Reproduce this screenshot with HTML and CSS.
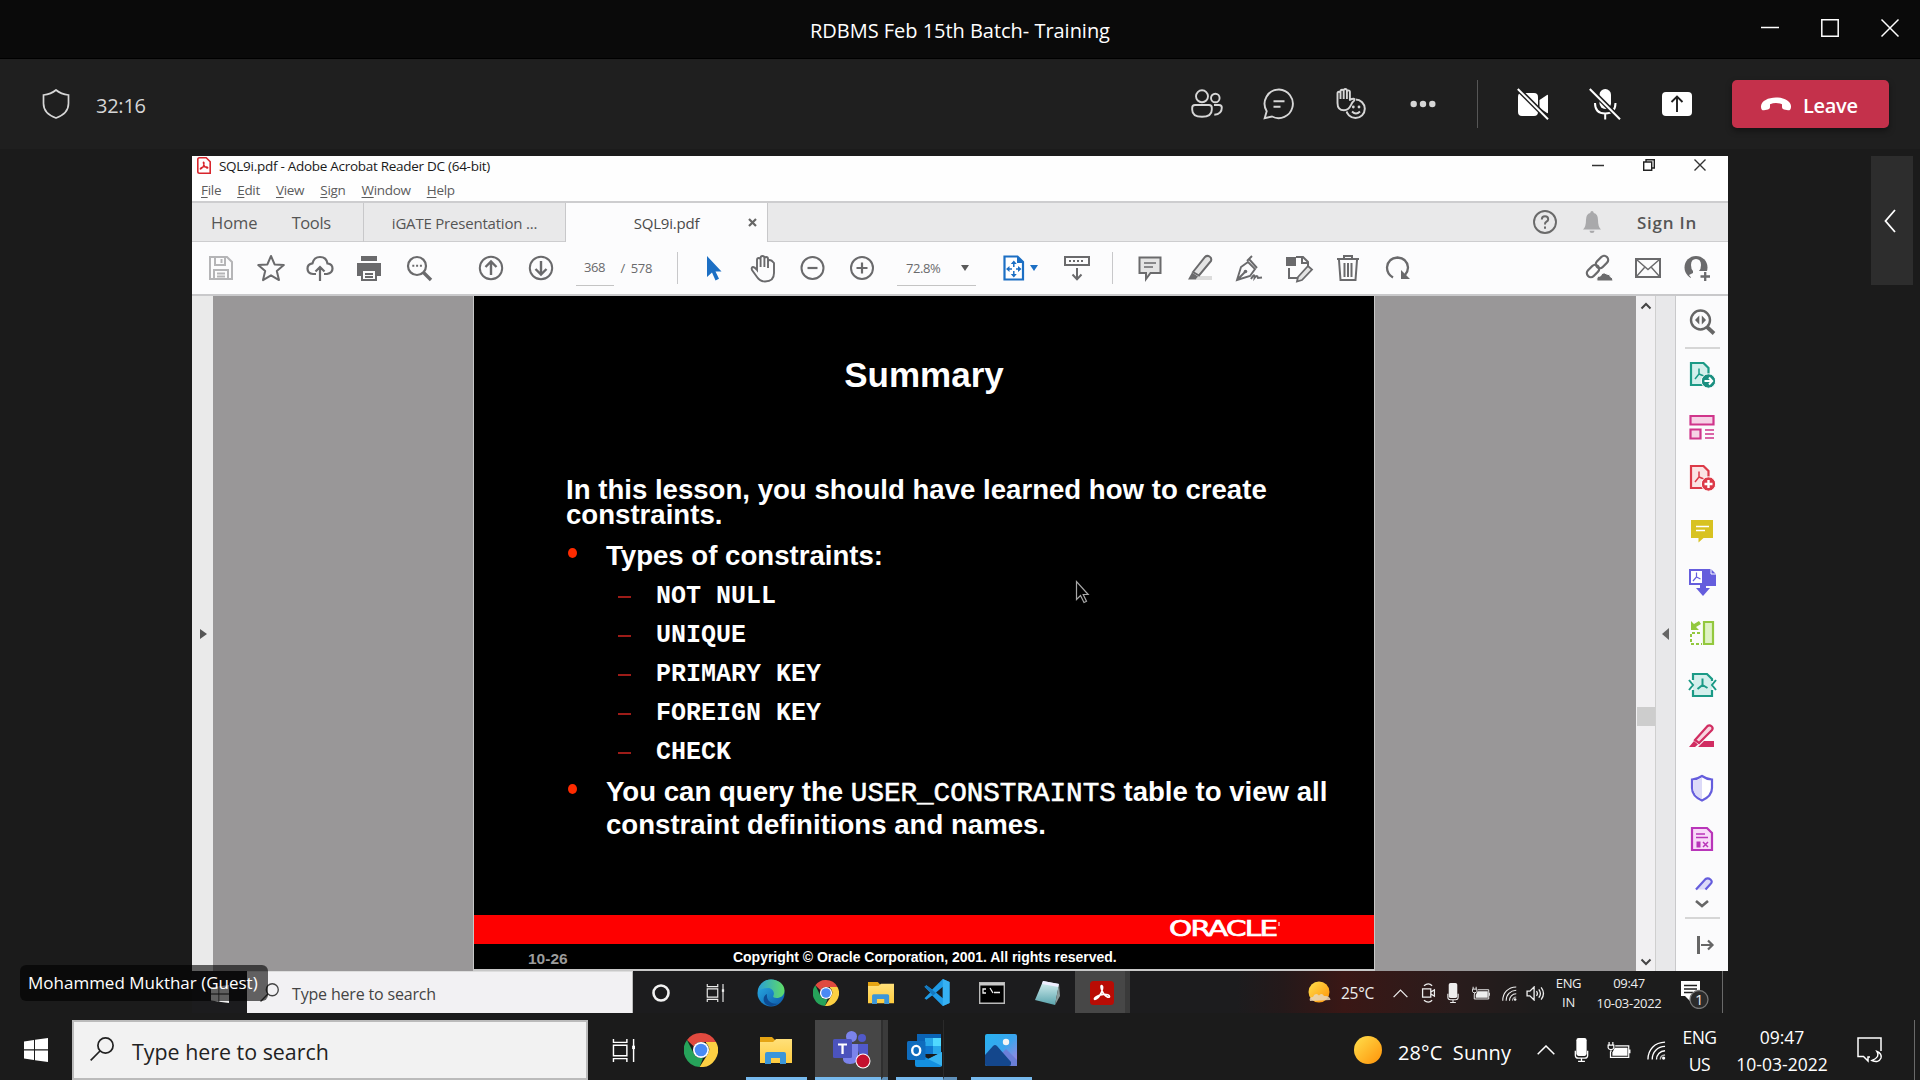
FILE: index.html
```html
<!DOCTYPE html>
<html lang="en">
<head>
<meta charset="utf-8">
<title>RDBMS Feb 15th Batch- Training</title>
<link rel="stylesheet" href="styles.css">
</head>
<body>
<svg class="sprite" aria-hidden="true">
  <defs>
    <linearGradient id="g-edge" x1="0" y1="0" x2="1" y2="1"><stop offset="0" stop-color="#2bb3e8"/><stop offset="1" stop-color="#0b56a8"/></linearGradient>
    <linearGradient id="g-edge2" x1="0" y1="0" x2="1" y2="0"><stop offset="0" stop-color="#2a9fd8"/><stop offset="1" stop-color="#5fdc66"/></linearGradient>
    <linearGradient id="g-sun" x1="0" y1="0" x2="1" y2="1"><stop offset="0" stop-color="#ffe04d"/><stop offset="1" stop-color="#ff9208"/></linearGradient>
    <linearGradient id="g-photo" x1="0" y1="0" x2="1" y2="1"><stop offset="0" stop-color="#27b2f0"/><stop offset=".5" stop-color="#3aa5ee"/><stop offset="1" stop-color="#b180dc"/></linearGradient>
    <linearGradient id="g-note" x1="0" y1="0" x2="0" y2="1"><stop offset="0" stop-color="#d8f1f2"/><stop offset="1" stop-color="#5aa4ad"/></linearGradient>
    <linearGradient id="g-fold" x1="0" y1="0" x2="0" y2="1"><stop offset="0" stop-color="#ffe07a"/><stop offset="1" stop-color="#ffcc3f"/></linearGradient>
  </defs>
  <symbol id="win" viewBox="0 0 24 24"><path fill="currentColor" d="M0 3.4 10 2v9.3H0zM11 1.8 24 0v11.3H11zM0 12.5h10V22L0 20.6zM11 12.5h13V24l-13-1.8z"/></symbol>
  <symbol id="search" viewBox="0 0 24 24"><g fill="none" stroke="currentColor" stroke-width="1.7"><circle cx="15.5" cy="8.5" r="7.6"/><path d="M10 14 .7 23.3"/></g></symbol>
  <symbol id="taskview" viewBox="0 0 24 24"><g fill="none" stroke="currentColor" stroke-width="1.5"><path d="M1 0v3.5h14V0M1 24v-3.5h14V24M1 6.5h14v11H1zM22 0v24"/></g><path fill="currentColor" d="M20.5 7h3v3.5h-3z"/></symbol>
  <symbol id="chrome" viewBox="0 0 34 34"><path fill="#e04a3f" d="M17 0a17 17 0 0 1 15 9H17a8 8 0 0 0-7.2 4.5L3 7A17 17 0 0 1 17 0z"/><path fill="#26a35a" d="M3 7l6.8 13.5A8 8 0 0 0 17 25l2 .2L15.600 34A17 17 0 0 1 3 7z"/><path fill="#fdd043" d="M32 9a17 17 0 0 1-16.400 25L23.500 21.500A8 8 0 0 0 22 10V9z"/><circle cx="17" cy="17" r="8" fill="#fff"/><circle cx="17" cy="17" r="6.300" fill="#4a8af4"/></symbol>
  <symbol id="folder" viewBox="0 0 32 27"><path fill="#e5a413" d="M0 0h12l3 3v4H0z"/><path fill="url(#g-fold)" d="M0 5h13l3-3h16v24H0z"/><path fill="#3b96d9" d="M5 27V17q0-2 2-2h17q2 0 2 2v10h-6v-6h-9v6z"/></symbol>
  <symbol id="edge" viewBox="0 0 28 28"><circle cx="14" cy="14" r="13.500" fill="url(#g-edge)"/><path fill="url(#g-edge2)" d="M1 12C3 4 8 .5 14 .5c8 0 13.500 5 13.500 11 0 5-4 7.500-8 7.500-3 0-4-1-3-2.500C18 13 15 9 11 9c-5 0-9 2-10 3z"/><path fill="#0c4b93" d="M10 15c-1 6 4 11 11 9.500-5 4-12 3-14-2-1.200-3.500.5-6.500 3-7.500z"/></symbol>
  <symbol id="vscode" viewBox="0 0 28 28"><path fill="#1f9be6" d="M20 0l7 3v22l-7 3L9 17l-6 4.500L1 20l6-6-6-6 2-1.500L9 11zM20 8l-7 6 7 6z"/><path fill="#1479c0" d="M1 8l2-1.500 10 8-3 2.500z"/><path fill="#36b1f3" d="M20 0l7 3v22l-7 3z"/></symbol>
  <symbol id="terminal" viewBox="0 0 26 22"><path fill="#000" stroke="#b9b9b9" stroke-width="1.400" d="M.7.700h24.600v20.600H.7z"/><path fill="#c9c9c9" d="M1 1h24v2.500H1z"/><path stroke="#eee" stroke-width="1.300" fill="none" d="M7 7H4v4h3M9 7.500v.1M9 10.500v.1M11 6l3 5M15 10.500h6"/></symbol>
  <symbol id="notepad" viewBox="0 0 26 26"><path fill="url(#g-note)" d="M9 1l16 3-4 21L1 20z"/><path fill="#eef" d="M9 1l16 3-.5 3-16.500-3z"/><path fill="#8a9a9a" d="M21 25l4-21 1 12z"/></symbol>
  <symbol id="acro" viewBox="0 0 24 24"><rect width="24" height="24" rx="3.500" fill="#b90c05"/><path fill="none" stroke="#fff" stroke-width="1.700" d="M11.500 4.500c2 0 1 6-1.500 9.500-2 3.200-5 5-5.500 4-.6-1.600 5-4.400 9-4.600 3.500-.2 6 .6 6 2 0 1.600-3 .9-5.300-1.900C12 10.700 10.200 5 11.500 4.500z"/></symbol>
  <symbol id="acrolite" viewBox="0 0 14 17"><path fill="#fff" stroke="#d8252c" stroke-width="1.600" d="M2.500.8h6.700l4 4v11.400H2.500Q.8 16.200.8 14.500v-12Q.8.800 2.500.800z"/><path fill="none" stroke="#d8252c" stroke-width="1.200" d="M6.500 5c1 0 .6 3-.7 5-1.100 1.800-2.500 2.500-2.600 1.800 0-1 2.800-2.200 5-2.200 2 0 2.800.6 2.700 1.200-.3.900-2 .1-3-1.300C6.800 8 5.800 5.200 6.500 5z"/></symbol>
  <symbol id="teams" viewBox="0 0 38 38"><circle cx="18.500" cy="5.500" r="5.500" fill="#7b83eb"/><circle cx="29" cy="7" r="4" fill="#5059c9"/><path fill="#5059c9" d="M23 13h12v10q0 6-7 7z"/><path fill="#7b83eb" d="M10 13h15v13q0 7-8 7t-7-7z"/><rect y="8" width="19" height="19" rx="1.500" fill="#4b53bc"/><path fill="#fff" d="M5 12.500h9v2h-3.300V23H8.400v-8.500H5z"/><circle cx="30" cy="30" r="7.500" fill="#fff"/><circle cx="30" cy="30" r="6.500" fill="#c4112f"/></symbol>
  <symbol id="outlook" viewBox="0 0 36 33"><path fill="#0a63b5" d="M10 0h24v20H10z"/><path fill="#28a8ea" d="M18 4h8v8h-8z"/><path fill="#50d9ff" d="M26 4h8v8h-8z"/><path fill="#0f78d0" d="M18 12h8v8h-8z"/><path fill="#28a8ea" d="M26 12h8v8h-8z"/><path fill="#1490df" d="M8 18l14 7 13-7v13q0 2-2 2H10q-2 0-2-2z"/><path fill="#38b4f0" d="M35 18v14L21 25z"/><rect y="7" width="18.500" height="19" rx="1.500" fill="#0f6cbd"/><ellipse cx="9.200" cy="16.500" rx="4" ry="4.600" fill="none" stroke="#fff" stroke-width="2.400"/></symbol>
  <symbol id="photos" viewBox="0 0 32 32"><rect width="32" height="32" rx="2" fill="url(#g-photo)"/><path fill="#6a7fd8" d="M14 22l7-7 11 11v6H16z"/><path fill="#14478c" d="M0 21l8-9q2-2 4 0l14 16v2q0 2-2 2H2q-2 0-2-2z"/><circle cx="21" cy="8" r="3.200" fill="#f4f4f4"/></symbol>
  <symbol id="sun" viewBox="0 0 28 28"><circle cx="14" cy="14" r="14" fill="url(#g-sun)"/></symbol>
  <symbol id="suncloud" viewBox="0 0 24 24"><circle cx="11" cy="11" r="10.500" fill="url(#g-sun)"/><path fill="#e9d6b8" opacity=".85" d="M2 20q-1.500-4 3-4 2-5 6-1.500 3-3 5 .5 6-.5 6.500 4z"/></symbol>
  <symbol id="caret-up" viewBox="0 0 18 10"><path fill="none" stroke="currentColor" stroke-width="1.500" d="M.7 9.300 9 1l8.300 8.300"/></symbol>
  <symbol id="mic" viewBox="0 0 16 28"><rect x="2" width="12" height="21" rx="2.500" fill="currentColor"/><path fill="none" stroke="currentColor" stroke-width="1.500" d="M.8 15v5q0 3.500 3.500 3.500h7.400q3.500 0 3.500-3.500v-5M8 23v4.200M4 27.200h8"/></symbol>
  <symbol id="battery" viewBox="0 0 24 18"><path fill="currentColor" d="M7.500 6H21v8.500H5V11z"/><path fill="none" stroke="currentColor" stroke-width="1.300" d="M3 10v6.300h19.300V4H8M23.500 8v4M1.500 0v3M5.500 0v3M.5 3.200h6v3Q6 8 3.500 8T.5 6.200zM3.500 8v2.500"/></symbol>
  <symbol id="wifi" viewBox="0 0 20 20"><g fill="none" stroke="currentColor" stroke-width="1.400"><path d="M1 19.500C1 9 8 1.500 19 1.200"/><path d="M5.500 19.500C5.500 11.500 11 6 19 5.700"/><path d="M10 19.500c0-5 3.500-9 9-9.200"/><path d="M14 19.500c0-3 2-4.600 5-4.800" opacity=".7"/></g><circle cx="17.500" cy="18" r="1.700" fill="currentColor"/></symbol>
  <symbol id="speaker" viewBox="0 0 20 16"><path fill="none" stroke="currentColor" stroke-width="1.400" d="M1 5.500h3L8.500 1v14L4 10.500H1zM11 5.500q2 2.500 0 5M13.500 3.500q3.500 4.500 0 9M16 1.500q5 6.500 0 13"/></symbol>
  <symbol id="meetnow" viewBox="0 0 16 22"><path fill="none" stroke="currentColor" stroke-width="1.400" d="M3 3q5-4 9 0M3 19q5 4 9 0M1.500 6.500h9v9h-9zM10.500 10l4-2.500v7l-4-2.500"/></symbol>
  <symbol id="notify" viewBox="0 0 26 26"><path fill="none" stroke="currentColor" stroke-width="1.500" d="M13 20h-2v4L6.500 19.500H1V1h23v13"/><path fill="none" stroke="currentColor" stroke-width="1.400" d="M20 14.500q3.500 5.500-5 9 6.500 3 9-2.500 1-4.500-4-6.500z"/></symbol>
  <symbol id="notify1" viewBox="0 0 28 28"><path fill="#fff" d="M0 0h19v15H9v5l-5-5H0z"/><path stroke="#222" stroke-width="1.400" d="M3 4.500h13M3 8h13M3 11.500h9"/><circle cx="18" cy="18.500" r="9" fill="#2b2b2b" stroke="#777" stroke-width="1.300"/></symbol>

  <symbol id="t-shield" viewBox="0 0 28 30"><path fill="none" stroke="currentColor" stroke-width="1.700" d="M14 1q5 4.200 12.500 5v8.500Q26.500 24.500 14 29 1.500 24.500 1.500 14.500V6Q9 5.200 14 1z"/></symbol>
  <symbol id="t-people" viewBox="0 0 32 30"><g fill="none" stroke="currentColor" stroke-width="1.900"><circle cx="11" cy="7.300" r="6"/><circle cx="24.300" cy="9" r="4.300"/><path d="M4 16h14q2.800 0 2.800 2.800v2q0 7-9.800 7t-9.800-7v-2Q1.200 16 4 16zM23 16h5q2.800 0 2.800 2.800 0 6.500-7.500 7"/></g></symbol>
  <symbol id="t-chat" viewBox="0 0 32 32"><path fill="none" stroke="currentColor" stroke-width="1.900" d="M16 1.500a14.300 14.300 0 1 1-7 27L1.700 30.200l2-7A14.300 14.300 0 0 1 16 1.500zM10.500 13.200h11M10.500 18.800h7"/></symbol>
  <symbol id="t-hand" viewBox="0 0 32 32"><circle cx="20.500" cy="20.800" r="9.300" fill="none" stroke="currentColor" stroke-width="2"/><path fill="#1f1f1f" stroke="#1f1f1f" stroke-width="4" d="M2.500 5v10q0 7 6 7 4 0 6-3.500l4.500-6q.5-2-4-1.500V5z"/><path fill="none" stroke="currentColor" stroke-width="1.900" stroke-linejoin="round" d="M2.500 12V5.500q0-1.700 1.500-1.700t1.500 1.700V3.400q0-1.600 1.600-1.600t1.600 1.600V2.600Q8.700 1 10.300 1t1.600 1.600v1.300q0-1.500 1.500-1.500T14.900 4v8q2-1.300 3.800-1.200 1.300.3.500 1.600-2 1.500-3.300 4.800Q13.500 22.300 9 22.300q-6.500 0-6.500-7.300zM5.500 5v6M8.700 3v8M11.900 3v8"/><path fill="none" stroke="currentColor" stroke-width="1.900" d="M17 23.500q4 3.800 8 0"/><circle cx="18.300" cy="19" r="1.400" fill="currentColor"/><circle cx="24" cy="19" r="1.400" fill="currentColor"/></symbol>
  <symbol id="t-dots" viewBox="0 0 26 8"><g fill="currentColor"><circle cx="3.700" cy="4" r="3.200"/><circle cx="13" cy="4" r="3.200"/><circle cx="22.300" cy="4" r="3.200"/></g></symbol>
  <symbol id="t-cam" viewBox="0 0 32 32"><path fill="currentColor" d="M4 5h13q4 0 4 4v15q0 4-4 4H5q-4 0-4-4V9q0-4 3-4zM22.500 12 30 7q1-.5 1 .5v17q0 1-1 .5l-7.500-5z"/><path stroke="#1f1f1f" stroke-width="5" d="M1 1l30 30"/><path stroke="currentColor" stroke-width="2" d="M.8 1 31 31.200"/></symbol>
  <symbol id="t-mic" viewBox="0 0 32 32"><rect x="10.500" y="1" width="11.500" height="20" rx="5.700" fill="currentColor"/><path fill="none" stroke="currentColor" stroke-width="2" d="M6 15q0 10.500 10.200 10.500T26.500 15M16.200 26v5.500"/><path stroke="#1f1f1f" stroke-width="5" d="M1 1l30 30"/><path stroke="currentColor" stroke-width="2" d="M.8 1 31 31.200"/></symbol>
  <symbol id="t-share" viewBox="0 0 30 24"><rect width="30" height="24" rx="4" fill="currentColor"/><path fill="none" stroke="#1f1f1f" stroke-width="1.900" d="M15 20V4.500M9.500 10 15 4.500l5.500 5.500"/></symbol>
  <symbol id="t-hang" viewBox="0 0 32 14"><path fill="currentColor" d="M16 .5c8 0 14.500 3.500 15 8.500.2 3-1 4.500-3 4.300l-4-.8c-1.500-.4-2-1.300-2-3V7.200Q16 5 10 7.200v2.300c0 1.700-.5 2.600-2 3l-4 .8c-2 .2-3.200-1.300-3-4.300C1.500 4 8 .5 16 .5z"/></symbol>

  <symbol id="a-save" viewBox="0 0 30 30"><path fill="none" stroke="#b5b5b7" stroke-width="2" d="M4 4h17l5 5v17H4zM9 4v8h10V4M8 26v-9h14v9M15.500 6v4M11 20.500h8M11 23.500h8"/></symbol>
  <symbol id="a-star" viewBox="0 0 30 30"><path fill="none" stroke="currentColor" stroke-width="2" stroke-linejoin="round" d="M15 3l3.600 8.400 9.200.7-7 6 2.200 9L15 22.300 7 27.100l2.200-9-7-6 9.200-.7z"/></symbol>
  <symbol id="a-cloud" viewBox="0 0 30 30"><path fill="none" stroke="currentColor" stroke-width="2.200" d="M11 21H8q-5.500-.3-5.500-5.500 0-4.500 5-5.200Q9 4 15 4q6.500 0 7.500 6.500 5 .5 5 5T22 21h-3M15 28V14M10.500 18.500 15 14l4.500 4.500"/></symbol>
  <symbol id="a-print" viewBox="0 0 30 30"><path fill="currentColor" d="M6 3h16v5H6zM2 10h24v13h-4v-5H6v5H2z"/><path fill="none" stroke="currentColor" stroke-width="2" d="M7 17h14v10H7zM10 21h8M10 24h8"/></symbol>
  <symbol id="a-find" viewBox="0 0 30 30"><circle cx="13" cy="13" r="9" fill="none" stroke="currentColor" stroke-width="2.200"/><path stroke="currentColor" stroke-width="3.300" d="M19.500 19.500 27 27"/><path stroke="currentColor" stroke-width="2" stroke-dasharray="2 1.800" d="M8.300 12.800h10"/></symbol>
  <symbol id="a-up" viewBox="0 0 30 30"><circle cx="15" cy="15" r="11.200" fill="none" stroke="currentColor" stroke-width="2"/><path fill="none" stroke="currentColor" stroke-width="2.400" d="M15 22V9M9.500 14 15 8.500l5.500 5.500"/></symbol>
  <symbol id="a-down" viewBox="0 0 30 30"><circle cx="15" cy="15" r="11.200" fill="none" stroke="currentColor" stroke-width="2"/><path fill="none" stroke="currentColor" stroke-width="2.400" d="M15 8v13M9.500 16l5.500 5.500 5.500-5.500"/></symbol>
  <symbol id="a-arrow" viewBox="0 0 30 30"><path fill="#1c6fc4" d="M8 3v21l5-4.500 3.500 8 3.500-1.700-3.500-7.300h6z"/></symbol>
  <symbol id="a-hand" viewBox="0 0 30 30"><path fill="none" stroke="currentColor" stroke-width="1.900" d="M9 17V7q0-2 1.800-2t1.800 2v7-9q0-2 1.900-2t1.900 2v9-8q0-2 1.800-2t1.800 2v9-6q0-2 1.800-2T26 10v10q0 8.500-9 8.500-5 0-8-4.500l-5-7q-1-2.500 1-3 1.500-.2 4 3z"/></symbol>
  <symbol id="a-minus" viewBox="0 0 30 30"><circle cx="14.500" cy="15" r="11" fill="none" stroke="currentColor" stroke-width="2"/><path stroke="currentColor" stroke-width="2.200" d="M9.500 15h10"/></symbol>
  <symbol id="a-plus" viewBox="0 0 30 30"><circle cx="15" cy="15" r="11" fill="none" stroke="currentColor" stroke-width="2"/><path stroke="currentColor" stroke-width="2.200" d="M9.500 15h11M15 9.500v11"/></symbol>
  <symbol id="a-fit" viewBox="0 0 22 26"><path fill="#fff" stroke="#1c6fc4" stroke-width="2.200" d="M1.500 1.500h13l5.500 5.500v17.500H1.500z"/><path fill="#1c6fc4" d="M14 1l7 7h-7zM10.800 5.500l3 3.500h-6zM10.800 22.500l3-3.500h-6zM3 14l3.500-3v6zM18.500 14l-3.500-3v6z"/><path stroke="#1c6fc4" stroke-width="1.500" stroke-dasharray="4 4" d="M10.800 8v12M5 14h12"/></symbol>
  <symbol id="a-read" viewBox="0 0 26 26"><path fill="none" stroke="currentColor" stroke-width="2" d="M1 2h24v8H1zM13 13v11M8.500 19.500l4.500 4.700 4.500-4.700"/><path stroke="currentColor" stroke-width="2" stroke-dasharray="2 2" d="M5 6h16"/></symbol>
  <symbol id="a-comment" viewBox="0 0 30 30"><path fill="#e4e4e4" stroke="currentColor" stroke-width="2" d="M4.500 4.500h21v15.500H15.500L11 26v-6H4.500z"/><path stroke="currentColor" stroke-width="1.600" d="M9 10h12M9 14h9"/></symbol>
  <symbol id="a-high" viewBox="0 0 30 30"><path fill="#dcdcdc" d="M10 23h17v4H10z"/><path fill="#e4e4e4" stroke="currentColor" stroke-width="2" d="M8 19 20 4q2-2 4.500-.5T26 8L14 22.500z"/><path fill="currentColor" d="M7 19.500l6 4-2.500 3H3z"/></symbol>
  <symbol id="a-pen" viewBox="0 0 30 30"><path fill="none" stroke="currentColor" stroke-width="1.900" d="M3 27l4-13 7-5 7 7-5 7zM3 27l8-8M13 8l5-5M15 6l8 9"/><circle cx="11.500" cy="18.500" r="1.800" fill="currentColor"/><path fill="none" stroke="currentColor" stroke-width="1.900" d="M17 26q4-7 3.500-1 3-4 3.500 0l4-.5"/></symbol>
  <symbol id="a-stamp" viewBox="0 0 30 30"><path fill="currentColor" d="M2 4h10v9H2z"/><path fill="none" stroke="currentColor" stroke-width="2" d="M12 4h7l5 5v6M5 15v10h8M18 4v6h6"/><path fill="#e4e4e4" stroke="currentColor" stroke-width="1.800" d="M14 24l10-11 4 3.500L18 27l-5 1.500z"/></symbol>
  <symbol id="a-trash" viewBox="0 0 30 30"><path fill="none" stroke="currentColor" stroke-width="2" d="M4 6h22M11 6V3h8v3M6 7l1.500 20h15L24 7M11.500 10v14M15 10v14M18.500 10v14"/></symbol>
  <symbol id="a-rotate" viewBox="0 0 30 30"><path fill="none" stroke="currentColor" stroke-width="2.300" d="M10 24.500Q4 21 4 14.500 5 5 14.500 4.500 24 5 25 14.500q0 4-3 7.500"/><path fill="currentColor" d="M18 17v9h9z"/></symbol>
  <symbol id="a-link" viewBox="0 0 30 30"><g fill="none" stroke="currentColor" stroke-width="2.300"><rect x="12" y="5" width="14" height="8" rx="4" transform="rotate(-45 19 9)"/><rect x="3" y="14" width="14" height="8" rx="4" transform="rotate(-45 10 18)"/></g><path fill="currentColor" stroke="#fcfcfd" d="M14 28q-1-5 3.500-5 2-5 6-2 4 0 4 3 2.500 0 2.500 4z"/></symbol>
  <symbol id="a-mail" viewBox="0 0 30 30"><path fill="none" stroke="currentColor" stroke-width="2" d="M3 6h24v18H3z"/><path fill="none" stroke="currentColor" stroke-width="1.400" d="M3.500 6.500 15 16.500l11.500-10M3.500 23.500l8-9M26.500 23.500l-8-9"/></symbol>
  <symbol id="a-user" viewBox="0 0 30 30"><circle cx="14" cy="14.500" r="11.500" fill="currentColor"/><path fill="#fcfcfd" d="M14 6q5 0 5 6 0 4-2 6v2l2 1.500V27H9v-2.500L7 22l4-2v-2q-2-2-2-6 0-6 5-6z"/><path fill="#fcfcfd" d="M17 18h13v12H17z"/><path stroke="currentColor" stroke-width="2.300" d="M18.500 23.500h9.500M23.200 19v9"/></symbol>
  <symbol id="a-help" viewBox="0 0 26 26"><circle cx="13" cy="13" r="11" fill="none" stroke="currentColor" stroke-width="1.900"/><path fill="none" stroke="currentColor" stroke-width="2" d="M9.800 10.500q0-3.300 3.200-3.300t3.200 3q0 1.500-1.700 2.500T13 15.500M13 17.500v2.200"/></symbol>
  <symbol id="a-bell" viewBox="0 0 20 24"><path fill="#a9a9ab" d="M10 1q1.500 0 1.800 2 4.200 1 4.200 7 0 7 3 9.500H1Q4 17 4 10q0-6 4.200-7Q8.500 1 10 1zM7.500 20.800h5q0 2.200-2.500 2.200t-2.500-2.200z"/></symbol>

  <symbol id="p-find" viewBox="0 0 30 30"><circle cx="13.500" cy="13" r="9.500" fill="none" stroke="currentColor" stroke-width="2.400"/><path stroke="currentColor" stroke-width="3.800" d="M20 20l7 6.500"/><path fill="currentColor" d="M12.300 8.500v9L8 13zM14.800 8.500v9L19 13z"/></symbol>
  <symbol id="p-export" viewBox="0 0 30 30"><path fill="#d4efec" stroke="#1b9a86" stroke-width="2.200" d="M4 3h12.500l5 5v17H4z"/><path fill="none" stroke="#1b9a86" stroke-width="1.500" d="M12 8.500V14l-4 5M12 14l6 2.500"/><circle cx="21.500" cy="21" r="7.200" fill="#1b8f80" stroke="#fff"/><path fill="none" stroke="#fff" stroke-width="2" d="M17.500 21h7M22 17.500l3.200 3.500-3.200 3.500"/></symbol>
  <symbol id="p-org" viewBox="0 0 30 30"><g fill="#f6d2e6" stroke="#d0358b" stroke-width="2.200"><path d="M3.500 4h23v8.500h-23zM3.500 17.500h10v9h-10z"/></g><path stroke="#d0358b" stroke-width="1.300" d="M18 18h9M18 22h9M18 26h9"/></symbol>
  <symbol id="p-create" viewBox="0 0 30 30"><path fill="#fbe3e3" stroke="#dc3a48" stroke-width="2.200" d="M4 3h12.500l5 5v17H4z"/><path fill="none" stroke="#dc3a48" stroke-width="1.500" d="M12 8.500V14l-4 5M12 14l6 2.500"/><circle cx="21.500" cy="21" r="7.200" fill="#dc3a48" stroke="#fff"/><path stroke="#fff" stroke-width="2.400" d="M17.500 21h8M21.500 17v8"/></symbol>
  <symbol id="p-comment" viewBox="0 0 30 30"><path fill="#d8c221" d="M4 5h22v18H16.500l-5 4.500V23H4z"/><path stroke="#fff" stroke-width="1.700" d="M9 11.500h13M9 15.500h9"/></symbol>
  <symbol id="p-combine" viewBox="0 0 30 30"><path fill="#fff" stroke="#655ddd" stroke-width="2" d="M3 4h13v14H3z"/><path fill="#655ddd" d="M16 3h8l5 5v12H16zM13 17h6v5h4l-7 8-7-8h4z"/><path fill="none" stroke="#655ddd" stroke-width="1.200" d="M9.500 6.500V11l-3.500 4M9.500 11l4 2"/><path fill="none" stroke="#fff" d="M24 3v5h5"/></symbol>
  <symbol id="p-pages" viewBox="0 0 30 30"><path fill="#dff2c4" stroke="#93c83e" stroke-width="2.200" d="M17 4h9v22h-9z"/><path fill="none" stroke="#93c83e" stroke-width="2" stroke-dasharray="3 2" d="M13 15H4v11h11"/><path fill="#93c83e" d="M4 3v9h8l-3-3 5-3-2-3-5 3z"/></symbol>
  <symbol id="p-compress" viewBox="0 0 30 30"><path fill="#d4efec" d="M6 4h14l5 5v17H6z"/><path fill="none" stroke="#1b9a86" stroke-width="2.200" d="M6 10V4h14l5 5v2M6 20v6h19v-6"/><path fill="none" stroke="#1b9a86" stroke-width="2" d="M2 10l4 5-4 5M29 10l-4 5 4 5M15.500 8.500V15l-5 4M15.500 15l5 3"/></symbol>
  <symbol id="p-redact" viewBox="0 0 30 30"><path fill="#f8d5df" stroke="#d12d62" stroke-width="2.200" d="M8 19 20.500 5q2-1.500 4 .3t.5 3.700L12 22z"/><path fill="#d12d62" d="M7 20l4 3.500L8 26H2zM17 20h10v6H11z"/></symbol>
  <symbol id="p-shield" viewBox="0 0 30 30"><path fill="#fff" stroke="#655ddd" stroke-width="2.200" d="M15 3q4 3 10 3.500V15q0 8-10 12.500Q5 23 5 15V6.500Q11 6 15 3z"/><path fill="#dcdaf8" d="M15 4.500v21.700Q6.200 22 6.200 15V7.600Q11.500 7 15 4.500z"/></symbol>
  <symbol id="p-form" viewBox="0 0 30 30"><path fill="#f8daf8" stroke="#b935b9" stroke-width="2.200" d="M5 4h15l5 5v17H5z"/><path stroke="#b935b9" stroke-width="1.500" d="M9 10h9M9 13.500h12"/><path fill="#b935b9" d="M9.500 17.500h4v6h-4z"/><path stroke="#b935b9" stroke-width="1.500" d="M16 18l5 5M21 18l-5 5"/></symbol>
  <symbol id="p-sign" viewBox="0 0 30 16"><path fill="#dcdaf8" stroke="#655ddd" stroke-width="2.200" d="M9 14.500 18.500 4q2.500-1.500 5 .5t0 4.500l-5 5.500"/></symbol>
  <symbol id="p-out" viewBox="0 0 20 20"><path stroke="currentColor" stroke-width="3" d="M3.500 1v18"/><path fill="none" stroke="currentColor" stroke-width="2.200" d="M6 10h11M13 5.500l4.500 4.500-4.500 4.500"/></symbol>
</svg>

<div class="window">
  <header class="titlebar">
    <span class="window-title">RDBMS Feb 15th Batch- Training</span>
    <div class="window-controls">
      <svg width="18" height="18"><path d="M0 8.500h18" stroke="#fff" stroke-width="1.500"/></svg>
      <svg width="18" height="18"><path d="M.8.800h16.400v16.400H.8z" fill="none" stroke="#fff" stroke-width="1.500"/></svg>
      <svg width="18" height="18"><path d="M.5.500l17 17M17.500.500l-17 17" stroke="#fff" stroke-width="1.500"/></svg>
    </div>
  </header>

  <div class="meeting-bar">
    <svg class="shield" width="28" height="30"><use href="#t-shield"/></svg>
    <span class="timer">32:16</span>
    <div class="meeting-tools">
      <svg width="32" height="30"><use href="#t-people"/></svg>
      <svg width="32" height="32"><use href="#t-chat"/></svg>
      <svg width="32" height="32"><use href="#t-hand"/></svg>
      <svg width="32" height="8"><use href="#t-dots"/></svg>
    </div>
    <div class="bar-divider"></div>
    <div class="device-tools">
      <svg width="32" height="32"><use href="#t-cam"/></svg>
      <svg width="32" height="32"><use href="#t-mic"/></svg>
      <svg width="32" height="24"><use href="#t-share"/></svg>
    </div>
    <button class="leave"><svg width="32" height="14"><use href="#t-hang"/></svg><span>Leave</span></button>
  </div>

  <main class="stage">
    <section class="shared">
      <div class="acro-title">
        <svg width="14" height="17"><use href="#acrolite"/></svg>
        <span class="acro-name">SQL9i.pdf - Adobe Acrobat Reader DC (64-bit)</span>
        <div class="acro-controls">
          <svg width="12" height="12"><path d="M0 6.500h12" stroke="#333" stroke-width="1.500"/></svg>
          <svg width="12" height="12"><path d="M.7 3h8v8.300h-8zM3 3V.7h8.300V9H8.700" fill="none" stroke="#222" stroke-width="1.400"/></svg>
          <svg width="12" height="12"><path d="M.5.500l11 11M11.500.500l-11 11" stroke="#333" stroke-width="1.400"/></svg>
        </div>
      </div>
      <nav class="acro-menu">
        <span><u>F</u>ile</span><span><u>E</u>dit</span><span><u>V</u>iew</span><span><u>S</u>ign</span><span><u>W</u>indow</span><span><u>H</u>elp</span>
      </nav>
      <div class="acro-tabs">
        <div class="home-tools"><span>Home</span><span class="tools-label">Tools</span></div>
        <div class="tab"><span>iGATE Presentation ...</span></div>
        <div class="tab current"><span>SQL9i.pdf</span><svg width="9" height="9"><path d="M1 1l7 7M8 1 1 8" stroke="#666" stroke-width="2.200"/></svg></div>
        <div class="account">
          <svg width="26" height="26"><use href="#a-help"/></svg>
          <svg width="20" height="24"><use href="#a-bell"/></svg>
          <span>Sign In</span>
        </div>
      </div>
      <div class="acro-tools">
        <div class="group g-file"><svg><use href="#a-save"/></svg><svg><use href="#a-star"/></svg><svg><use href="#a-cloud"/></svg><svg><use href="#a-print"/></svg><svg><use href="#a-find"/></svg></div>
        <div class="group g-nav"><svg><use href="#a-up"/></svg><svg><use href="#a-down"/></svg></div>
        <span class="page-no">368</span>
        <span class="page-total">/&nbsp; 578</span>
        <div class="split"></div>
        <div class="group g-view"><svg><use href="#a-arrow"/></svg><svg><use href="#a-hand"/></svg><svg><use href="#a-minus"/></svg><svg><use href="#a-plus"/></svg></div>
        <div class="zoom-level"><span>72.8%</span><i class="tri"></i></div>
        <svg class="fit"><use href="#a-fit"/></svg><i class="tri blue"></i>
        <svg class="read"><use href="#a-read"/></svg>
        <div class="split second"></div>
        <div class="group g-mark"><svg><use href="#a-comment"/></svg><svg><use href="#a-high"/></svg><svg><use href="#a-pen"/></svg><svg><use href="#a-stamp"/></svg><svg><use href="#a-trash"/></svg><svg><use href="#a-rotate"/></svg></div>
        <div class="group g-share"><svg><use href="#a-link"/></svg><svg><use href="#a-mail"/></svg><svg><use href="#a-user"/></svg></div>
      </div>

      <div class="viewer">
        <div class="nav-strip"><i class="tri-right"></i></div>
        <div class="canvas">
          <article class="slide">
            <h1>Summary</h1>
            <div class="slide-body">
              <p class="intro">In this lesson, you should have learned how to create<br>constraints.</p>
              <div class="point"><i class="dot"></i><p>Types of constraints:</p></div>
              <ul class="types">
                <li>NOT NULL</li><li>UNIQUE</li><li>PRIMARY KEY</li><li>FOREIGN KEY</li><li>CHECK</li>
              </ul>
              <div class="point last"><i class="dot"></i><p>You can query the <code>USER_CONSTRAINTS</code> table to view all<br>constraint definitions and names.</p></div>
            </div>
            <div class="red-band"><span class="oracle">ORACLE</span><i class="mark"></i></div>
            <footer class="slide-foot"><span class="slide-no">10-26</span><span class="copy">Copyright © Oracle Corporation, 2001. All rights reserved.</span></footer>
            <svg class="pointer" width="15" height="24"><path d="M1.500 1.500v18l4-4 3.500 7 2.500-1.200L8.200 14.500h5z" fill="#000" stroke="#a8a8a8" stroke-width="1.200"/></svg>
          </article>
        </div>
        <div class="scrollbar">
          <svg width="12" height="8"><path d="M1.500 6.500 6 2l4.500 4.500" fill="none" stroke="#444" stroke-width="2"/></svg>
          <div class="thumb"></div>
          <svg width="12" height="8"><path d="M1.500 1.500 6 6l4.500-4.500" fill="none" stroke="#444" stroke-width="2"/></svg>
        </div>
        <div class="pane-strip"><i class="tri-left"></i></div>
        <aside class="tools-pane">
          <svg class="first"><use href="#p-find"/></svg>
          <hr>
          <div class="tool-list">
            <svg><use href="#p-export"/></svg><svg><use href="#p-org"/></svg><svg><use href="#p-create"/></svg><svg><use href="#p-comment"/></svg><svg><use href="#p-combine"/></svg><svg><use href="#p-pages"/></svg><svg><use href="#p-compress"/></svg><svg><use href="#p-redact"/></svg><svg><use href="#p-shield"/></svg><svg><use href="#p-form"/></svg>
          </div>
          <svg class="cut"><use href="#p-sign"/></svg>
          <svg class="more"><path d="M1 2l6 5 6-5" fill="none" stroke="#666" stroke-width="2.600"/></svg>
          <hr>
          <svg class="out"><use href="#p-out"/></svg>
        </aside>
      </div>

      <div class="inner-bar">
        <div class="inner-start"><svg width="18" height="18"><use href="#win"/></svg></div>
        <div class="inner-search"><svg width="19" height="19"><use href="#search"/></svg><span>Type here to search</span></div>
        <div class="inner-apps">
          <div><svg width="18" height="18"><circle cx="9" cy="9" r="7.500" fill="none" stroke="#f2f2f2" stroke-width="2.600"/></svg></div>
          <div><svg width="19" height="18"><use href="#taskview"/></svg></div>
          <div><svg width="28" height="28"><use href="#edge"/></svg></div>
          <div><svg width="26" height="26"><use href="#chrome"/></svg></div>
          <div><svg width="26" height="22"><use href="#folder"/></svg></div>
          <div><svg width="28" height="27"><use href="#vscode"/></svg></div>
          <div><svg width="26" height="22"><use href="#terminal"/></svg></div>
          <div><svg width="26" height="26"><use href="#notepad"/></svg></div>
          <div class="open"><svg width="24" height="24"><use href="#acro"/></svg></div>
        </div>
        <div class="inner-tray">
          <svg width="24" height="24"><use href="#suncloud"/></svg>
          <span class="temp">25°C</span>
          <svg class="i-caret" width="15" height="9"><use href="#caret-up"/></svg>
          <svg class="i-meet" width="15" height="20"><use href="#meetnow"/></svg>
          <svg class="i-mic" width="12" height="20"><use href="#mic"/></svg>
          <svg class="i-bat" width="18" height="15"><use href="#battery"/></svg>
          <svg class="i-wifi" width="15" height="15"><use href="#wifi"/></svg>
          <svg class="i-spk" width="19" height="15"><use href="#speaker"/></svg>
          <div class="lang"><span>ENG</span><span>IN</span></div>
          <div class="clock"><span>09:47</span><span>10-03-2022</span></div>
          <div class="i-note"><svg width="28" height="28"><use href="#notify1"/></svg><b>1</b></div>
          <div class="i-peek"></div>
        </div>
      </div>
    </section>
    <button class="expand"><svg width="12" height="24"><path d="M11 1 1.500 12 11 23" fill="none" stroke="#fff" stroke-width="1.800"/></svg></button>
    <div class="guest">Mohammed Mukthar (Guest)</div>
  </main>

  <footer class="taskbar">
    <div class="start"><svg width="24" height="24"><use href="#win"/></svg></div>
    <div class="searchbox"><svg width="24" height="24"><use href="#search"/></svg><span>Type here to search</span></div>
    <div class="apps">
      <div class="app view"><svg width="24" height="23"><use href="#taskview"/></svg></div>
      <div class="app chrome"><svg width="34" height="34"><use href="#chrome"/></svg></div>
      <div class="app run folder"><svg width="32" height="27"><use href="#folder"/></svg></div>
      <div class="app run teams"><svg width="38" height="38"><use href="#teams"/></svg></div>
      <div class="stack lit"></div>
      <div class="app run outlook"><svg width="36" height="33"><use href="#outlook"/></svg></div>
      <div class="stack"></div>
      <div class="app run photos"><svg width="32" height="32"><use href="#photos"/></svg></div>
    </div>
    <div class="tray">
      <svg width="28" height="28"><use href="#sun"/></svg>
      <span class="weather">28°C&nbsp; Sunny</span>
      <svg class="o-caret" width="18" height="10"><use href="#caret-up"/></svg>
      <svg class="o-mic" width="15" height="24"><use href="#mic"/></svg>
      <svg class="o-bat" width="24" height="17"><use href="#battery"/></svg>
      <svg class="o-wifi" width="19" height="19"><use href="#wifi"/></svg>
      <div class="lang"><span>ENG</span><span>US</span></div>
      <div class="clock"><span>09:47</span><span>10-03-2022</span></div>
      <svg class="o-note" width="26" height="26"><use href="#notify"/></svg>
      <div class="peek"></div>
    </div>
  </footer>
</div>
</body>
</html>
```

FILE: styles.css
```css
* { box-sizing: border-box; }
body { margin: 0; background: #1b1b1b; color: #fff; font-family: "Open Sans", "Noto Sans", sans-serif; overflow: hidden; white-space: nowrap; }
svg { display: block; flex: none; overflow: visible; }
.sprite { position: absolute; width: 0; height: 0; }
button { border: 0; padding: 0; font: inherit; color: inherit; }
.window { width: 1920px; height: 1080px; display: flex; flex-direction: column; }

/* Meeting window chrome */
.titlebar { height: 59px; background: #0a0a0a; border-bottom: 1px solid #000; display: flex; align-items: center; position: relative; }
.window-title { flex: 1; text-align: center; font-size: 20px; padding-top: 2px; letter-spacing: -.03px; }
.window-controls { position: absolute; right: 21px; top: 19px; display: flex; gap: 42px; }

.meeting-bar { height: 90px; background: #1f1f1f; display: flex; align-items: center; padding: 0 31px 0 42px; color: #d6d6d6; }
.timer { width: 50px; margin-left: 26px; font-size: 20px; padding-top: 2px; letter-spacing: -.25px; }
.meeting-tools { display: flex; align-items: center; gap: 40px; margin-left: auto; }
.bar-divider { width: 1px; height: 48px; background: #565656; margin: 0 39px 0 38px; }
.device-tools { display: flex; align-items: center; gap: 40px; color: #fff; }
.leave { width: 157px; height: 48px; margin-left: 39px; border-radius: 5px; background: #c4314b; color: #fff; font-size: 20px; font-weight: 600; letter-spacing: -.3px; display: flex; align-items: center; gap: 11px; padding-left: 28px; box-shadow: 0 3px 6px #0006; }
.leave span { padding-top: 2px; }

.stage { height: 871px; padding: 7px 0 0 192px; display: flex; align-items: flex-start; background: #1b1b1b; position: relative; }
.shared { width: 1536px; height: 857px; background: #fefefe; display: flex; flex-direction: column; }
.expand { width: 42px; height: 129px; margin-left: 143px; padding-right: 4px; background: #2d2d2d; display: flex; align-items: center; justify-content: center; }
.guest { position: absolute; left: 20px; top: 816px; width: 248px; height: 36px; border-radius: 6px; background: rgba(0, 0, 0, .6); font-size: 17px; line-height: 35px; padding-left: 8px; }

/* PDF reader */
.acro-title { height: 22px; display: flex; align-items: center; padding: 0 22px 3px 5px; color: #1a1a1a; font-size: 13.500px; letter-spacing: -.28px; }
.acro-name { margin-left: 8px; }
.acro-controls { display: flex; gap: 39px; margin: -1px 0 0 auto; }
.acro-menu { height: 23px; display: flex; align-items: center; padding: 0 0 0 9px; gap: 16px; font-size: 13.500px; color: #5c5c5c; letter-spacing: -.3px; }
.acro-menu u { text-underline-offset: 2px; }
.acro-tabs { height: 41px; background: #e9e9ea; border: solid #cdcdcf; border-width: 2px 0 1px; display: flex; color: #555; }
.home-tools { width: 171px; padding-left: 19px; display: flex; align-items: center; gap: 34px; font-size: 16.500px; }
.tools-label { letter-spacing: -.4px; }
.tab { width: 202px; border-left: 1px solid #c8c8ca; display: flex; align-items: center; justify-content: center; font-size: 15px; letter-spacing: -.2px; position: relative; height: 39px; }
.tab.current { background: #fcfcfd; border-right: 1px solid #c8c8ca; color: #4a4a4a; width: 203px; }
.tab.current svg { position: absolute; right: 10px; top: 15px; }
.account { margin-left: auto; display: flex; align-items: center; padding-right: 29px; color: #6a6a6a; font-size: 17px; }
.account svg + svg { margin: 0 35px 0 24px; }
.account span { color: #555; width: 62px; font-weight: 600; letter-spacing: .75px; }

.acro-tools { height: 54px; background: #fcfcfd; border-bottom: 2px solid #c9c9cb; display: flex; align-items: center; color: #6a6a6c; font-size: 13px; letter-spacing: -.4px; }
.group { display: flex; gap: 19.500px; }
.group svg { width: 30px; height: 30px; }
.g-file { margin-left: 14px; }
.g-nav { margin-left: 42px; }
.page-no { width: 38px; height: 36px; margin-left: 20px; text-align: center; line-height: 35px; border-bottom: 1px solid #c4c4c4; }
.page-total { width: 33px; margin-left: 7px; }
.split { width: 1px; height: 32px; background: #c8c8ca; margin-left: 23px; }
.g-view { margin-left: 21px; }
.zoom-level { width: 79px; height: 36px; margin-left: 20px; padding: 0 7px 0 9px; display: flex; align-items: center; justify-content: space-between; border-bottom: 1px solid #c4c4c4; }
.tri { width: 0; border: 4px solid transparent; border-top: 6px solid #5a5a5a; border-bottom: 0; }
.tri.blue { border-top-color: #1c6fc4; margin-left: 5px; }
.fit { width: 22px; height: 26px; margin-left: 27px; }
.read { width: 26px; height: 26px; margin-left: 26px; }
.split.second { margin-left: 22px; }
.g-mark { margin-left: 22px; }
.g-share { margin: 0 16px 0 auto; }

.viewer { height: 675px; display: flex; background: #999798; }
.nav-strip { width: 21px; background: #eaeaea; display: flex; align-items: center; padding-left: 8px; }
.tri-right { border: 5px solid transparent; border-left: 7px solid #555; border-right: 0; }
.tri-left { border: 6px solid transparent; border-right: 7px solid #666; border-left: 0; }
.canvas { width: 1423px; padding-left: 260px; }

/* Slide */
.slide { width: 902px; height: 675px; background: #000; border: 1px solid #c8c8c8; border-top: 0; border-bottom-width: 2px; position: relative; font-family: "Liberation Sans", Arial, sans-serif; font-weight: 700; display: flex; flex-direction: column; }
.slide h1 { margin: 59px 0 0; font-size: 35px; line-height: 40px; text-align: center; }
.slide-body { padding: 83px 0 0 92px; height: 520px; font-size: 27.600px; }
.slide-body p { margin: 0; }
.intro { line-height: 24.700px; }
.point { display: flex; margin-top: 13px; line-height: 32.500px; }
.dot { width: 9px; height: 10px; border-radius: 50%; background: #ff2b00; margin: 8px 29px 0 2px; flex: none; }
.types { list-style: none; margin: 5px 0 0; padding: 0; font-family: "Liberation Mono", "Courier New", monospace; font-size: 25px; line-height: 38.900px; }
.types li { display: flex; align-items: center; white-space: pre; }
.types li::before { content: ""; width: 13px; height: 2px; background: #9d1c18; margin: 0 25px 0 52px; }
.point.last { margin-top: 4px; }
.slide code { font-family: "Liberation Mono", "Courier New", monospace; font-weight: 400; font-size: 27.600px; line-height: 1; -webkit-text-stroke: .6px #fff; }
.red-band { height: 29px; flex: none; background: #fe0000; padding-left: 695px; display: flex; align-items: center; }
.oracle { width: 110px; font: 400 21px/29px "DejaVu Sans", sans-serif; letter-spacing: -1.200px; -webkit-text-stroke: .7px #fff; transform: scaleX(1.400); transform-origin: left; }
.mark { width: 2px; height: 4px; background: #fff8; margin: -12px 0 0 -1px; }
.slide-foot { display: flex; height: 25px; align-items: center; padding-left: 54px; font-size: 14px; }
.slide-no { color: #9c9c9c; width: 205px; font-size: 15.500px; padding-top: 4px; }
.copy { letter-spacing: -.02px; }
.pointer { position: absolute; left: 601px; top: 284px; }

.scrollbar { width: 20px; background: #f1f0f2; border-right: 1px solid #cfcfcf; display: flex; flex-direction: column; align-items: center; padding: 6px 0 5px; }
.thumb { width: 18px; height: 19px; background: #cdcdcd; margin: 397px 0 auto; }
.pane-strip { width: 20px; background: #e8e8ea; border-right: 1px solid #c9c9cb; display: flex; align-items: center; padding-left: 6px; }
.tools-pane { width: 52px; background: #fbfbfc; display: flex; flex-direction: column; align-items: center; color: #666; }
.tools-pane svg { width: 30px; height: 30px; }
.tools-pane .first { margin-top: 11px; }
.tools-pane hr { width: 35px; height: 2px; background: #d6d6d6; border: 0; margin: 10px 0 0; flex: none; }
.tool-list { display: flex; flex-direction: column; gap: 21.600px; margin-top: 11px; }
.tools-pane .cut { height: 16px; margin-top: 21px; }
.tools-pane .more { width: 14px; height: 8px; margin-top: 8px; }
.tools-pane .out { width: 20px; height: 20px; margin: 16px 0 0 5px; }

/* Taskbar inside the shared screen */
.inner-bar { height: 42px; background: linear-gradient(90deg, #1c1c1e 0 68%, #24191a 71%, #3a1715 75%, #2a1c1c 82%, #1c1c1c 88%); display: flex; align-items: center; color: #eee; }
.inner-start { width: 55px; padding: 4px 0 0 19px; }
.inner-search { width: 386px; height: 42px; background: #f2f1f3; color: #444; border-top: 1px solid #ddd; border-right: 1px solid #bbb; display: flex; align-items: center; padding: 2px 0 0 13px; gap: 13px; font-size: 16px; letter-spacing: -.17px; }
.inner-search svg { margin-top: -3px; }
.inner-apps { display: flex; height: 42px; }
.inner-apps div { width: 55.200px; padding-top: 1px; display: flex; align-items: center; justify-content: center; }
.inner-apps div.open { background: #474747; box-shadow: inset -5px 0 #3a3a3a; }
.inner-tray { margin-left: auto; display: flex; align-items: center; width: 420px; font-size: 15.500px; height: 42px; padding-top: 2px; }
.temp { width: 33px; margin-left: 9px; letter-spacing: -.3px; }
.i-caret { margin-left: 19px; }
.i-meet { margin-left: 13px; }
.i-mic { margin-left: 11px; }
.i-bat { margin-left: 13px; }
.i-wifi { margin-left: 12px; }
.i-spk { margin-left: 9px; }
.lang, .clock { display: flex; flex-direction: column; align-items: center; }
.inner-tray .lang, .inner-tray .clock { font-size: 13px; line-height: 19px; letter-spacing: -.3px; }
.inner-tray .lang { width: 27px; margin-left: 10px; line-height: 19px; }
.inner-tray .clock { width: 66px; margin-left: 14px; line-height: 20px; }
.i-note { margin: 4px 0 0 19px; width: 28px; position: relative; }
.i-note b { position: absolute; left: 14px; top: 8px; font: 15px "Open Sans", sans-serif; }
.i-peek { width: 1px; height: 42px; background: #6a6a6a; margin: -2px 0 0 13px; }

/* Local taskbar */
.taskbar { height: 60px; display: flex; align-items: center; background: #1b1b1b; }
.start { width: 72px; padding-left: 24px; }
.searchbox { width: 516px; height: 60px; background: #f2f2f2; border: 2px solid #bbb; color: #222; display: flex; align-items: center; padding-left: 16px; gap: 18px; font-size: 21.400px; }
.searchbox svg { margin-top: -2px; }
.searchbox span { padding-top: 3px; }
.apps { display: flex; height: 60px; }
.app { display: flex; align-items: center; justify-content: center; }
.app.view { width: 72px; }
.app.chrome { width: 82px; margin-right: 4px; }
.app.run { width: 61px; border-bottom: 3px solid #76b9ed; padding: 3px 2px 0 0; }
.app.teams { width: 66px; margin-left: 8px; background: #464646; padding: 3px 0 0 7px; }
.app.outlook { width: 47px; margin-left: 8px; padding: 3px 0 0 11px; justify-content: flex-start; }
.app.photos { margin-left: 14px; }
.stack { width: 14px; border-left: 1px solid #2a2a2a; border-bottom: 3px solid #5f90b9; }
.stack.lit { width: 7px; border-left: 2px solid #2f2f2f; background: #3b3b3b; }
.tray { margin-left: auto; width: 566px; height: 60px; display: flex; align-items: center; }
.weather { width: 113px; margin-left: 16px; font-size: 20px; padding-top: 4px; letter-spacing: .07px; }
.o-caret { margin-left: 26px; }
.o-mic { margin-left: 19px; }
.o-bat { margin-left: 18px; }
.o-wifi { margin-left: 16px; }
.tray .lang { width: 35px; margin-left: 16px; letter-spacing: -.5px; }
.tray .clock { width: 94px; margin-left: 18px; }
.tray .lang, .tray .clock { font-size: 17.500px; line-height: 27px; padding-top: 1px; }
.o-note { margin-left: 28px; }
.peek { width: 1px; height: 60px; background: #6a6a6a; margin-left: 31px; }
```
